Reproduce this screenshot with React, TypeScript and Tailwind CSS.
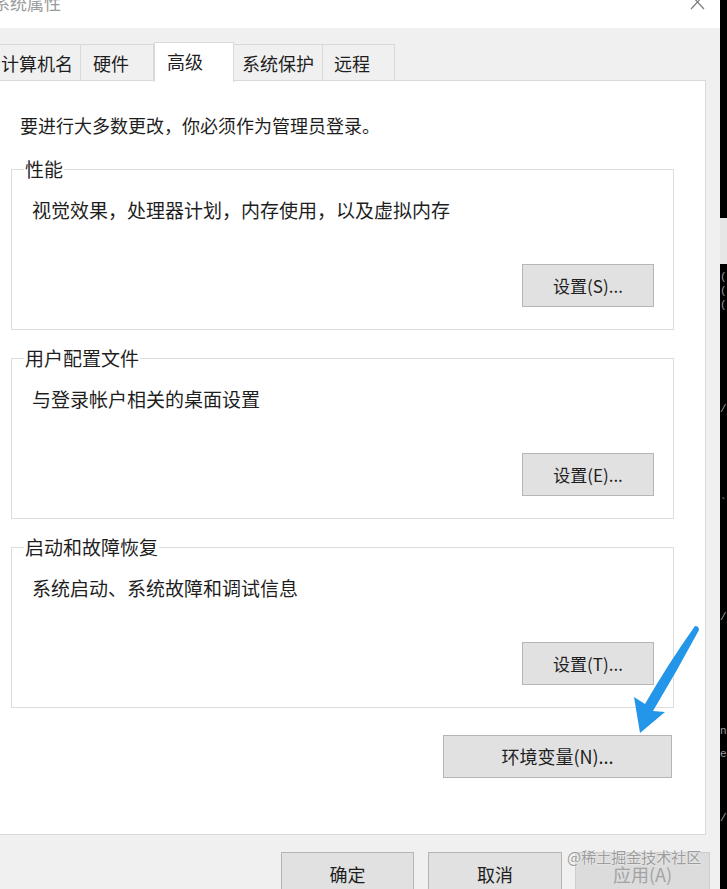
import React from 'react';

const font = "font-['Noto_Sans_CJK_SC','Noto_Sans',sans-serif]";

const tabs = [
  { label: '计算机名', cls: 'w-[89px] pl-[8px]' },
  { label: '硬件', cls: 'w-[74px] pl-[12px]' },
  { label: '高级', cls: 'w-[80px] pl-[12px]', active: true },
  { label: '系统保护', cls: 'w-[90px] pl-[8px]' },
  { label: '远程', cls: 'w-[73px] pl-[11px]' },
];

const groups = [
  { title: '性能', desc: '视觉效果，处理器计划，内存使用，以及虚拟内存', btn: '设置(S)...', mt: 'mt-[20px]' },
  { title: '用户配置文件', desc: '与登录帐户相关的桌面设置', btn: '设置(E)...', mt: 'mt-[16px]' },
  { title: '启动和故障恢复', desc: '系统启动、系统故障和调试信息', btn: '设置(T)...', mt: 'mt-[16px]' },
];

function WinButton({ children, className = '', disabled = false }: { children: React.ReactNode; className?: string; disabled?: boolean }) {
  return (
    <button
      className={`flex shrink-0 items-center justify-center border text-[17px] ${disabled ? 'border-[#cdcdcd] bg-[#dcdcdc] text-[#a3a3a3]' : 'border-[#b5b5b5] bg-[#e1e1e1] text-[#1e1e1e]'} ${className}`}
    >
      {children}
    </button>
  );
}

export default function App() {
  return (
    <div className={`relative flex h-[889px] w-[727px] overflow-hidden bg-black ${font}`}>
      {/* dialog */}
      <div className="flex w-[720px] shrink-0 flex-col bg-[#f0f0f0]">
        {/* title bar */}
        <div className="flex h-[28px] shrink-0 items-start bg-white">
          <span className="-ml-[7px] -mt-[7px] text-[17px] leading-[20px] text-[#9a9a9a]">系统属性</span>
          <svg className="-mt-[6px] ml-auto mr-[15px]" width="15" height="16" viewBox="0 0 15 16">
            <path d="M1 1 L14 15 M14 1 L1 15" stroke="#7a7a7a" strokeWidth="1.2" fill="none" />
          </svg>
        </div>

        {/* tab strip */}
        <div className="relative z-10 -ml-[8px] flex h-[52px] shrink-0 items-end">
          {tabs.map((t) =>
            t.active ? (
              <div
                key={t.label}
                className={`-mb-[2px] h-[40px] border border-b-0 border-[#d9d9d9] bg-white pt-[5px] text-[18px] leading-[26px] text-[#1e1e1e] ${t.cls}`}
              >
                {t.label}
              </div>
            ) : (
              <div
                key={t.label}
                className={`-ml-px h-[36px] border border-b-0 border-[#d9d9d9] bg-[#f0f0f0] pt-[5px] text-[18px] leading-[26px] text-[#1e1e1e] first:ml-0 ${t.cls}`}
              >
                {t.label}
              </div>
            )
          )}
        </div>

        {/* tab panel */}
        <div className="-ml-px h-[755px] w-[707px] shrink-0 border border-[#d9d9d9] bg-white pt-[32px]">
          <p className="pl-[20px] text-[18px] leading-[24px] text-[#1e1e1e]">要进行大多数更改，你必须作为管理员登录。</p>

          {groups.map((g) => (
            <fieldset key={g.title} className={`ml-[11px] w-[663px] border border-[#dcdcdc] px-[12px] pb-[22px] ${g.mt}`}>
              <legend className="px-[1px] text-[19px] leading-[24px] text-[#1e1e1e]">{g.title}</legend>
              <p className="mt-[17px] pl-[8px] text-[19px] leading-[24px] text-[#1e1e1e]">{g.desc}</p>
              <div className="mt-[42px] flex justify-end pr-[7px]">
                <WinButton className="h-[43px] w-[132px]">{g.btn}</WinButton>
              </div>
            </fieldset>
          ))}

          <div className="mt-[27px] flex justify-end pr-[33px]">
            <WinButton className="h-[43px] w-[229px] text-[18px]">环境变量(N)...</WinButton>
          </div>
        </div>

        {/* bottom buttons */}
        <div className="relative flex shrink-0 gap-[14px] pl-[281px] pt-[17px]">
          <WinButton className="h-[45px] w-[133px] text-[18px]">确定</WinButton>
          <WinButton className="h-[45px] w-[134px] text-[18px]">取消</WinButton>
          <WinButton className="-ml-px h-[45px] w-[135px] text-[18px]" disabled>应用(A)</WinButton>
          <span className="absolute left-[567px] top-[13px] text-[15px] leading-[18px] text-[#9c9c9c] [text-shadow:0_0_2px_#fff]">
            @稀土掘金技术社区
          </span>
        </div>
      </div>

      {/* terminal strip on the right */}
      <div className="flex flex-1 flex-col overflow-hidden font-['Liberation_Mono',monospace] text-[11px] leading-[14px] text-[#9a9a9a]">
        <div className="mt-[218px] h-[46px] shrink-0 bg-[#e6e6e6]" />
        <span className="mt-[6px]">(</span>
        <span>(</span>
        <span>(</span>
        <span className="mt-[90px]">/</span>
        <span className="mt-[80px] text-[#b8a26a]">`</span>
        <span className="mt-[100px]">/</span>
        <span className="mt-[100px]">n</span>
        <span className="mt-[9px]">e</span>
        <span className="mt-[50px]">/</span>
      </div>

      {/* blue annotation arrow */}
      <svg className="pointer-events-none absolute left-0 top-0" width="727" height="889" viewBox="0 0 727 889">
        <path
          d="M640 733 L634 697 L645 704 Q668 664 695 626 Q699 626 699 630 Q677 671 653 711 L665 712 Z"
          fill="#2496ea"
        />
      </svg>
    </div>
  );
}
